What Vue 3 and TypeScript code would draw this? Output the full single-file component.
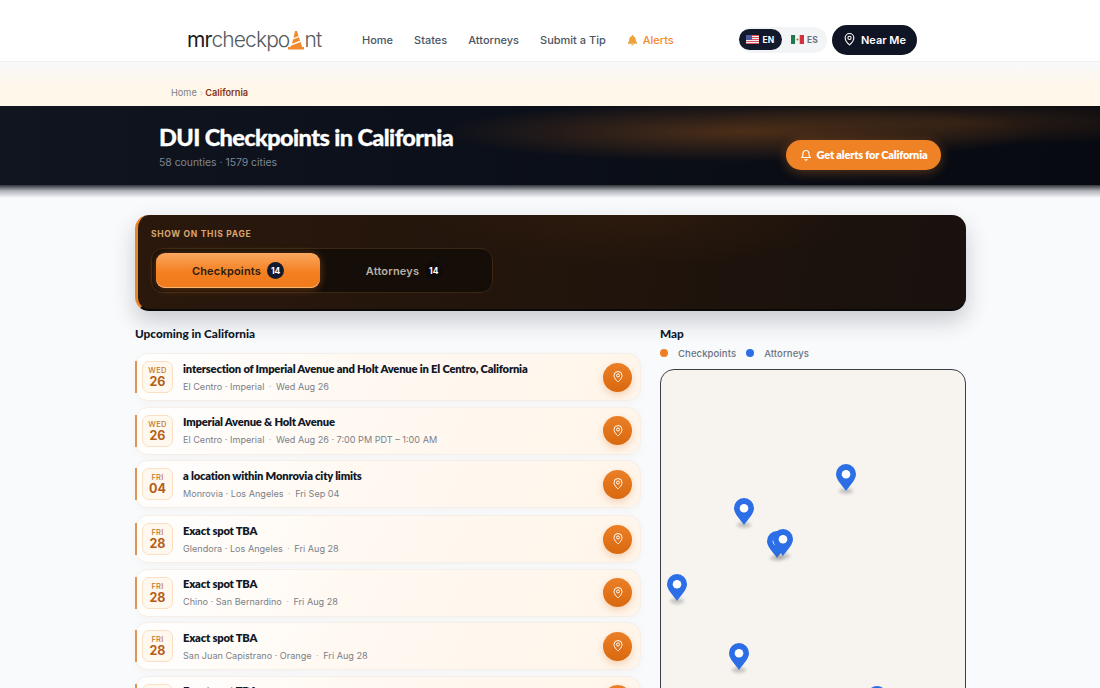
<script setup lang="ts">
interface Row {
  dow: string
  day: string
  title: string
  place: string
  when: string
}

const navLinks = ['Home', 'States', 'Attorneys', 'Submit a Tip']

const firstRows: Row[] = [
  { dow: 'WED', day: '26', title: 'intersection of Imperial Avenue and Holt Avenue in El Centro, California', place: 'El Centro · Imperial', when: 'Wed Aug 26' },
  { dow: 'WED', day: '26', title: 'Imperial Avenue & Holt Avenue', place: 'El Centro · Imperial', when: 'Wed Aug 26 · 7:00 PM PDT – 1:00 AM' },
  { dow: 'FRI', day: '04', title: 'a location within Monrovia city limits', place: 'Monrovia · Los Angeles', when: 'Fri Sep 04' },
]

const tbaRows: Row[] = [
  { dow: 'FRI', day: '28', title: 'Exact spot TBA', place: 'Glendora · Los Angeles', when: 'Fri Aug 28' },
  { dow: 'FRI', day: '28', title: 'Exact spot TBA', place: 'Chino · San Bernardino', when: 'Fri Aug 28' },
  { dow: 'FRI', day: '28', title: 'Exact spot TBA', place: 'San Juan Capistrano · Orange', when: 'Fri Aug 28' },
  { dow: 'FRI', day: '28', title: 'Exact spot TBA', place: 'Pomona · Los Angeles', when: 'Fri Aug 28' },
]

const groups = [firstRows, tbaRows]

// marker centre x / top y, relative to the map box
const pins = [
  { x: 185, y: 94 },
  { x: 83, y: 128 },
  { x: 116, y: 161 },
  { x: 122, y: 159 },
  { x: 16, y: 204 },
  { x: 78, y: 273 },
  { x: 216, y: 316 },
]
</script>

<template>
  <div class="page">
    <header class="topbar">
      <a class="logo">
        <span class="logo-dark">mr</span><span>checkpo</span>
        <svg class="cone" viewBox="0 0 16 20" width="16" height="20">
          <path d="M7 0h2l1.500 5-5 2z" fill="#f08a2c" />
          <path d="M5 8.600l6-2.300 1 3.500-8 3z" fill="#f08a2c" />
          <path d="M3.300 14.400L12.800 11 14 16h2v2.500H0V16h2.400z" fill="#f08a2c" />
        </svg>
        <span>nt</span>
      </a>
      <nav class="nav">
        <a v-for="link in navLinks" :key="link">{{ link }}</a>
        <a class="alerts">
          <svg viewBox="0 0 24 24" width="11" height="12" fill="#eda33c">
            <path d="M12 1a2 2 0 0 1 2 2v.6A7 7 0 0 1 19 10c0 6 3 8 3 8v2H2v-2s3-2 3-8a7 7 0 0 1 5-6.400V3a2 2 0 0 1 2-2z" />
            <path d="M9 21.500h6a3 2.500 0 0 1-6 0z" />
          </svg>
          Alerts
        </a>
      </nav>
      <div class="lang">
        <span class="lang-btn on">
          <svg class="flag" viewBox="0 0 13 9" width="13" height="9">
            <rect width="13" height="9" fill="#f1f1f4" />
            <path d="M0 0h13v1H0zM0 2h13v1H0zM0 4h13v1H0zM0 6h13v1H0zM0 8h13v1H0z" fill="#d8535f" />
            <rect width="6" height="5" fill="#4a5a9c" />
          </svg>
          EN
        </span>
        <span class="lang-btn">
          <svg class="flag" viewBox="0 0 13 9" width="13" height="9">
            <rect width="4.300" height="9" fill="#1f7a4d" />
            <rect x="4.300" width="4.400" height="9" fill="#f4f4f4" />
            <rect x="8.700" width="4.300" height="9" fill="#d2303c" />
            <circle cx="6.500" cy="4.500" r="1.100" fill="#9a7a3c" />
          </svg>
          ES
        </span>
      </div>
      <a class="near">
        <svg viewBox="0 0 24 24" width="13" height="13" fill="none" stroke="#fff" stroke-width="2">
          <path d="M12 22s8-7 8-13a8 8 0 1 0-16 0c0 6 8 13 8 13z" />
          <circle cx="12" cy="9" r="3" />
        </svg>
        Near Me
      </a>
    </header>

    <div class="crumbs">
      <a>Home</a><i>›</i><b>California</b>
    </div>

    <section class="hero">
      <div class="hero-text">
        <h1>DUI Checkpoints in California</h1>
        <p>58 counties · 1579 cities</p>
      </div>
      <a class="cta">
        <svg viewBox="0 0 24 24" width="12" height="12" fill="none" stroke="#fff" stroke-width="2.200" stroke-linecap="round" stroke-linejoin="round">
          <path d="M6 9a6 6 0 0 1 12 0c0 7 3 8 3 8H3s3-1 3-8z" />
          <path d="M10 21a2.200 2.200 0 0 0 4 0" />
        </svg>
        Get alerts for California
      </a>
    </section>

    <main class="content">
      <section class="panel">
        <div class="panel-label">SHOW ON THIS PAGE</div>
        <div class="tabs">
          <button class="tab active">Checkpoints <span class="count">14</span></button>
          <button class="tab">Attorneys <span class="count">14</span></button>
        </div>
      </section>

      <div class="columns">
        <section class="list-col">
          <h2>Upcoming in California</h2>
          <div v-for="(group, g) in groups" :key="g" class="group">
            <article v-for="(row, i) in group" :key="i" class="row">
              <div class="date">
                <span class="dow">{{ row.dow }}</span>
                <span class="day">{{ row.day }}</span>
              </div>
              <div class="info">
                <div class="title">{{ row.title }}</div>
                <div class="meta">{{ row.place }}<i>·</i>{{ row.when }}</div>
              </div>
              <span class="go">
                <svg viewBox="0 0 24 24" width="12" height="12" fill="none" stroke="#fff" stroke-width="2">
                  <path d="M12 22s8-7 8-13a8 8 0 1 0-16 0c0 6 8 13 8 13z" />
                  <circle cx="12" cy="9" r="3" />
                </svg>
              </span>
            </article>
          </div>
        </section>

        <aside class="map-col">
          <h2>Map</h2>
          <div class="legend">
            <span class="dot orange"></span><span class="legend-name">Checkpoints</span>
            <span class="dot blue"></span><span class="legend-name">Attorneys</span>
          </div>
          <div class="map">
            <div
              v-for="(pin, i) in pins"
              :key="i"
              class="pin"
              :style="{ left: pin.x - 10 + 'px', top: pin.y + 'px' }"
            >
              <span class="pin-shadow"></span>
              <svg viewBox="0 0 20 27" width="20" height="27">
                <path d="M10 0a10 10 0 0 1 10 10c0 6-6 11-10 17C6 21 0 16 0 10A10 10 0 0 1 10 0z" fill="#2b6ee6" />
                <circle cx="10" cy="10.300" r="4.300" fill="#fff" />
              </svg>
            </div>
          </div>
        </aside>
      </div>
    </main>
  </div>
</template>

<style>
html,
body {
  margin: 0;
  background: #f8fafc;
  overflow: hidden;
}
</style>

<style scoped>
.page {
  width: 1100px;
  height: 688px;
  overflow: hidden;
  font-family: Inter, "Noto Sans", sans-serif;
  background: #f8fafc;
  color: #0f172a;
}

.topbar {
  height: 62px;
  box-sizing: border-box;
  background: #fff;
  border-bottom: 1px solid #eef0f3;
  display: flex;
  align-items: center;
  padding: 18px 0 0 187px;
  position: relative;
  z-index: 2;
}

.logo {
  display: flex;
  align-items: flex-end;
  width: 175px;
  font-size: 21px;
  font-weight: 300;
  letter-spacing: -0.9px;
  color: #555a60;
  line-height: 24px;
}

.logo-dark {
  color: #1a1a1a;
  font-weight: 400;
}

.cone {
  margin: 0 0 1px -1px;
}

.nav {
  display: flex;
  align-items: center;
  gap: 21px;
  font-size: 11px;
  font-weight: 500;
  color: #4b5563;
  width: 377px;
}

.alerts {
  color: #f08a2c;
  display: flex;
  align-items: center;
  gap: 5px;
}

.lang {
  display: flex;
  align-items: center;
  background: #f3f4f6;
  border-radius: 13px;
  height: 26px;
  width: 88px;
  margin-right: 5px;
}

.lang-btn {
  display: flex;
  align-items: center;
  justify-content: center;
  gap: 3px;
  font-size: 8.500px;
  font-weight: 700;
  letter-spacing: 0.2px;
  color: #6b7280;
  height: 21px;
  width: 43px;
  border-radius: 11px;
}

.lang-btn.on {
  background: #131a2b;
  color: #fff;
  margin-right: 1px;
}

.near {
  display: flex;
  align-items: center;
  justify-content: center;
  gap: 5px;
  width: 85px;
  height: 30px;
  border-radius: 15px;
  background: #0f1524;
  color: #fff;
  font-size: 11px;
  font-weight: 600;
}

.crumbs {
  height: 44px;
  box-sizing: border-box;
  padding: 25px 0 0 171px;
  font-size: 9.200px;
  line-height: 12px;
  background: linear-gradient(#f8f9fb, #fff7ea 55%);
  color: #7b7f86;
}

.crumbs i {
  font-style: normal;
  color: #e8cfb2;
  margin: 0 2px 0 3px;
}

.crumbs b {
  font-weight: 600;
  color: #8a3412;
}

.hero {
  height: 79px;
  box-sizing: border-box;
  padding: 17px 159px 0;
  display: flex;
  justify-content: space-between;
  position: relative;
  background:
    radial-gradient(ellipse 300px 30px at 740px 26px, rgba(140, 78, 26, 0.5), transparent),
    radial-gradient(ellipse 260px 24px at 960px 16px, rgba(100, 58, 22, 0.4), transparent),
    linear-gradient(90deg, #10151f, #0c101a 40%, #070a11);
}

/* soft fade under the hero */
.hero::after {
  content: "";
  position: absolute;
  left: 0;
  right: 0;
  top: 100%;
  height: 13px;
  background: linear-gradient(rgba(14, 17, 26, 0.85), rgba(40, 44, 54, 0.35) 45%, rgba(248, 250, 252, 0));
}

.hero-text h1 {
  margin: 0;
  font-family: Lato, sans-serif;
  font-size: 23.500px;
  line-height: 28px;
  font-weight: 900;
  letter-spacing: -0.6px;
  -webkit-text-stroke: 0.3px #fff;
  color: #fff;
}

.hero-text p {
  margin: 5px 0 0;
  font-size: 10.400px;
  color: #7f8794;
}

.cta {
  margin-top: 17px;
  width: 155px;
  height: 30px;
  box-sizing: border-box;
  padding-bottom: 1px;
  border-radius: 15px;
  background: #f08226;
  display: flex;
  align-items: center;
  justify-content: center;
  gap: 5px;
  color: #fff;
  font-family: Lato, sans-serif;
  font-size: 11px;
  font-weight: 800;
  letter-spacing: -0.2px;
  box-shadow: 0 2px 12px rgba(240, 130, 38, 0.35);
}

.content {
  padding: 30px 134px 0 135px;
}

.panel {
  height: 96px;
  box-sizing: border-box;
  padding: 14px 13px;
  border-radius: 14px;
  border-left: 3px solid #e8842a;
  border-bottom: 2px solid #0a0a0a;
  background:
    radial-gradient(ellipse 220px 50px at 60% 0, rgba(80, 44, 16, 0.25), transparent),
    linear-gradient(100deg, #2a180c, #20140c 60%, #18110d);
  box-shadow: 0 10px 22px rgba(30, 30, 40, 0.22);
}

.panel-label {
  font-size: 8.500px;
  line-height: 11px;
  font-weight: 700;
  letter-spacing: 0.7px;
  color: #d9a571;
}

.tabs {
  margin-top: 8px;
  width: 342px;
  height: 45px;
  box-sizing: border-box;
  padding: 4px;
  display: grid;
  grid-template-columns: 164px 1fr;
  border: 1px solid #3b2713;
  border-radius: 12px;
  background: #140d08;
}

.tab {
  border: 0;
  background: none;
  font: inherit;
  font-size: 11px;
  font-weight: 600;
  letter-spacing: 0.2px;
  color: #b8b0a6;
  display: flex;
  align-items: center;
  justify-content: center;
  gap: 6px;
  padding: 0;
  border-radius: 9px;
}

.tab.active {
  color: #2b1c10;
  background: linear-gradient(#fba860, #f47f20 55%, #ee7a1c);
  box-shadow: 0 1px 8px rgba(240, 130, 38, 0.4), inset 0 -1px 0 #ffb574;
}

.count {
  width: 17px;
  height: 17px;
  border-radius: 50%;
  background: #0e0a08;
  color: #fff;
  font-size: 8.500px;
  font-weight: 700;
  letter-spacing: 0;
  display: flex;
  align-items: center;
  justify-content: center;
}

.tab.active .count {
  background: #131a30;
}

.columns {
  display: grid;
  grid-template-columns: 506px 306px;
  gap: 19px;
  margin-top: 15px;
}

h2 {
  margin: 0;
  font-family: Lato, sans-serif;
  font-size: 11.800px;
  line-height: 16px;
  font-weight: 900;
  color: #0f172a;
}

.group {
  display: flex;
  flex-direction: column;
  gap: 5.500px;
  margin-bottom: 7px;
}

.list-col h2 {
  margin-bottom: 11px;
}

.row {
  height: 48px;
  box-sizing: border-box;
  display: flex;
  align-items: center;
  gap: 10px;
  padding: 0 8px 0 6px;
  border: 1px solid #f5efe8;
  border-radius: 13px;
  background: linear-gradient(120deg, #fff 0, #fff9f2 40%, #fff5ea);
  box-shadow: 0 2px 6px rgba(200, 170, 130, 0.08);
  position: relative;
}

.row::before {
  content: "";
  position: absolute;
  left: -1px;
  top: 7px;
  bottom: 7px;
  width: 2px;
  background: #e3924f;
}

.date {
  width: 31px;
  height: 32px;
  box-sizing: border-box;
  flex: none;
  border: 1px solid #fadfc2;
  border-radius: 7px;
  background: #fff8ef;
  display: flex;
  flex-direction: column;
  align-items: center;
  justify-content: center;
}

.dow {
  font-size: 7.500px;
  line-height: 9px;
  font-weight: 500;
  letter-spacing: 0.3px;
  color: #c2782d;
}

.day {
  font-size: 12.500px;
  line-height: 13px;
  font-weight: 700;
  color: #b45f17;
}

.info {
  flex: 1;
  min-width: 0;
  padding-bottom: 1px;
}

.title {
  font-family: Lato, sans-serif;
  font-size: 11.200px;
  line-height: 15px;
  font-weight: 800;
  letter-spacing: -0.2px;
  color: #111827;
}

.meta {
  margin-top: 5px;
  font-size: 9.100px;
  line-height: 12px;
  color: #7b8089;
}

.meta i {
  font-style: normal;
  margin: 0 4.500px;
  color: #b9bcc2;
}

.go {
  width: 29px;
  height: 29px;
  flex: none;
  border-radius: 50%;
  background: linear-gradient(#ec7f26, #d9690f);
  box-shadow: 0 3px 7px rgba(217, 105, 15, 0.25);
  display: flex;
  align-items: center;
  justify-content: center;
}

.legend {
  display: flex;
  align-items: center;
  margin-top: 4px;
  height: 14px;
  font-size: 9.500px;
  font-weight: 500;
  letter-spacing: 0.1px;
  color: #6b7280;
}

.legend-name {
  margin-right: 10px;
}

.dot {
  width: 8px;
  height: 8px;
  border-radius: 50%;
  margin-right: 10px;
}

.orange {
  background: #f07f23;
}

.blue {
  background: #2b6ee6;
}

.map {
  margin-top: 9px;
  height: 400px;
  box-sizing: border-box;
  border: 1px solid #3c3f44;
  border-radius: 14px;
  background: #f7f4f0;
  position: relative;
  overflow: hidden;
}

.pin {
  position: absolute;
  width: 20px;
  height: 27px;
}

.pin svg {
  display: block;
  position: relative;
}

.pin-shadow {
  position: absolute;
  left: 3px;
  bottom: -3px;
  width: 14px;
  height: 6px;
  border-radius: 50%;
  background: rgba(90, 90, 90, 0.3);
  filter: blur(1.500px);
}
</style>
